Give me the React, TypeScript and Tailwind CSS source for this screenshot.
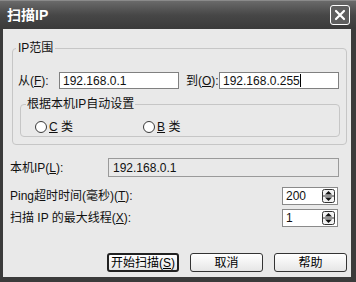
import React from "react"

const font = "font-['Liberation_Sans','Noto_Sans_CJK_SC',sans-serif]"

function U({ children }: { children: React.ReactNode }) {
  return <span className="underline underline-offset-[1px]">{children}</span>
}

function Radio({ label, k }: { label: string; k: string }) {
  return (
    <div className="flex items-center gap-[2px]">
      <span className="w-[12px] h-[12px] rounded-full border border-[#3a3a3a] bg-white" />
      <span>
        <U>{k}</U> {label}
      </span>
    </div>
  )
}

function Spin({ value }: { value: string }) {
  return (
    <div className="w-[56px] h-[18px] bg-white border border-[#8a8a8a] flex items-center pl-[3px] pr-[2px]">
      <span className="flex-1 text-[12px] leading-none">{value}</span>
      <svg width="13" height="14" viewBox="0 0 13 14">
        <rect x="0.5" y="0.5" width="12" height="13" rx="2" fill="#f2f2f2" stroke="#333" />
        <line x1="1" y1="7" x2="12" y2="7" stroke="#333" />
        <path d="M3 5.5 L6.5 2 L10 5.5 Z" fill="#111" />
        <path d="M3 8.5 L6.5 12 L10 8.5 Z" fill="#111" />
      </svg>
    </div>
  )
}

function Btn({ children, def, w }: { children: React.ReactNode; def?: boolean; w: string }) {
  return (
    <button
      className={
        "h-[19px] rounded-[3px] bg-gradient-to-b from-white to-[#e6e6e6] text-[12px] leading-none text-black " +
        w +
        (def ? " border-2 border-[#222]" : " border border-[#333]")
      }
    >
      {children}
    </button>
  )
}

export default function App() {
  return (
    <div className={"w-[356px] h-[282px] bg-[#3b3b3b] flex flex-col text-[12px] text-[#111] " + font}>
      {/* title bar */}
      <div className="h-[29px] flex items-center justify-between pl-[7px] pr-[6px] bg-gradient-to-b from-[#6a6a6a] via-[#474747] to-[#3a3a3a] border-t border-[#8a8a8a]">
        <span className="text-white font-bold text-[14px] leading-none">扫描IP</span>
        <div className="w-[20px] h-[20px] rounded-[3px] border border-white bg-[#5e5e5e] flex items-center justify-center">
          <svg width="12" height="12" viewBox="0 0 12 12">
            <path d="M2 2 L10 10 M10 2 L2 10" stroke="white" strokeWidth="2.2" strokeLinecap="round" />
          </svg>
        </div>
      </div>

      <div className="flex-1 ml-[3px] mr-[5px] mb-[5px] bg-[#e9e9e9] flex flex-col">
        {/* IP range group */}
        <fieldset className="mt-[12px] ml-[9px] w-[335px] border border-[#c6c6c6] rounded-[4px] pb-[7px]">
          <legend className="ml-[3px] px-[2px] leading-[14px]">IP范围</legend>
          <div className="mt-[17px] pl-[5px] flex items-center h-[17px]">
            <span className="w-[41px]">
              从(<U>F</U>):
            </span>
            <div className="w-[120px] h-[17px] bg-white border border-[#808080] flex items-center pl-[3px]">
              192.168.0.1
            </div>
            <span className="ml-[7px] w-[33px]">
              到(<U>O</U>):
            </span>
            <div className="w-[120px] h-[17px] bg-white border border-[#808080] flex items-center pl-[3px]">
              192.168.0.255
              <span className="w-[1px] h-[13px] bg-black" />
            </div>
          </div>

          <fieldset className="mt-[8px] ml-[7px] w-[320px] border border-[#c6c6c6] rounded-[4px] pb-[2px]">
            <legend className="ml-[5px] px-[1px] leading-[14px]">根据本机IP自动设置</legend>
            <div className="mt-[9px] h-[14px] flex items-center pl-[14px] gap-[70px]">
              <Radio k="C" label="类" />
              <Radio k="B" label="类" />
            </div>
          </fieldset>
        </fieldset>

        {/* local ip */}
        <div className="mt-[13px] pl-[7px] pr-[12px] flex items-center justify-between h-[19px]">
          <span>
            本机IP(<U>L</U>):
          </span>
          <div className="w-[231px] h-[19px] border border-[#9a9a9a] bg-[#e9e9e9] flex items-center pl-[4px]">
            192.168.0.1
          </div>
        </div>

        <div className="mt-[10px] pl-[7px] pr-[13px] flex items-center justify-between">
          <span>
            Ping超时时间(毫秒)(<U>T</U>):
          </span>
          <Spin value="200" />
        </div>
        <div className="mt-[4px] pl-[7px] pr-[13px] flex items-center justify-between">
          <span>
            扫描 IP 的最大线程(<U>X</U>):
          </span>
          <Spin value="1" />
        </div>

        {/* buttons */}
        <div className="mt-[26px] pr-[4px] flex justify-end gap-[11px]">
          <Btn def w="w-[72px]">
            开始扫描(<U>S</U>)
          </Btn>
          <Btn w="w-[73px]">取消</Btn>
          <Btn w="w-[73px]">帮助</Btn>
        </div>
      </div>
    </div>
  )
}
